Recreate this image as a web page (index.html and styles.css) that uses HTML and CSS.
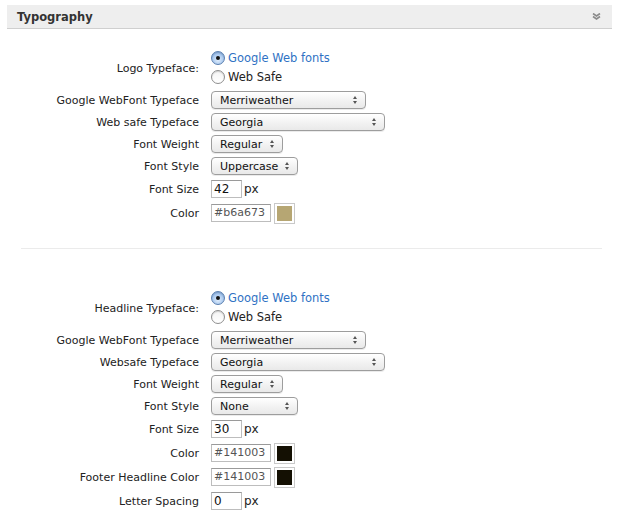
FILE: index.html
```html
<!DOCTYPE html>
<html>
<head>
<meta charset="utf-8">
<link rel="stylesheet" href="styles.css">
</head>
<body>
<div class="panel">
  <div class="header">
    <h2 class="title">Typography</h2>
    <svg class="chev" width="9" height="7" viewBox="0 0 9 7"><path d="M1 0.5 L4.5 3 L8 0.5 M1 3.5 L4.5 6 L8 3.5" fill="none" stroke="#8a8a8a" stroke-width="1.6"/></svg>
  </div>

  <div class="section">
    <div class="row radio-row">
      <div class="label">Logo Typeface:</div>
      <div class="radios">
        <div class="radio-line"><span class="radio on"></span><span class="radio-text blue">Google Web fonts</span></div>
        <div class="radio-line"><span class="radio"></span><span class="radio-text">Web Safe</span></div>
      </div>
    </div>
    <div class="row"><div class="label">Google WebFont Typeface</div><div class="select w155"><span>Merriweather</span><i class="arrows"></i></div></div>
    <div class="row"><div class="label">Web safe Typeface</div><div class="select w174"><span>Georgia</span><i class="arrows"></i></div></div>
    <div class="row"><div class="label">Font Weight</div><div class="select w72"><span>Regular</span><i class="arrows"></i></div></div>
    <div class="row"><div class="label">Font Style</div><div class="select w87"><span>Uppercase</span><i class="arrows"></i></div></div>
    <div class="row tall"><div class="label">Font Size</div><div class="ctl"><div class="input w31">42</div><span class="unit">px</span></div></div>
    <div class="row tall"><div class="label">Color</div><div class="ctl"><div class="input w60 muted">#b6a673</div><div class="swatch"><span class="swatch-fill tan"></span></div></div></div>
  </div>

  <div class="sep"></div>

  <div class="section">
    <div class="row radio-row">
      <div class="label">Headline Typeface:</div>
      <div class="radios">
        <div class="radio-line"><span class="radio on"></span><span class="radio-text blue">Google Web fonts</span></div>
        <div class="radio-line"><span class="radio"></span><span class="radio-text">Web Safe</span></div>
      </div>
    </div>
    <div class="row"><div class="label">Google WebFont Typeface</div><div class="select w155"><span>Merriweather</span><i class="arrows"></i></div></div>
    <div class="row"><div class="label">Websafe Typeface</div><div class="select w174"><span>Georgia</span><i class="arrows"></i></div></div>
    <div class="row"><div class="label">Font Weight</div><div class="select w72"><span>Regular</span><i class="arrows"></i></div></div>
    <div class="row"><div class="label">Font Style</div><div class="select w87"><span>None</span><i class="arrows"></i></div></div>
    <div class="row tall"><div class="label">Font Size</div><div class="ctl"><div class="input w31">30</div><span class="unit">px</span></div></div>
    <div class="row tall"><div class="label">Color</div><div class="ctl"><div class="input w60 muted">#141003</div><div class="swatch"><span class="swatch-fill dark"></span></div></div></div>
    <div class="row tall"><div class="label">Footer Headline Color</div><div class="ctl"><div class="input w60 muted">#141003</div><div class="swatch"><span class="swatch-fill dark"></span></div></div></div>
    <div class="row tall"><div class="label">Letter Spacing</div><div class="ctl"><div class="input w31">0</div><span class="unit">px</span></div></div>
  </div>
</div>
</body>
</html>
```

FILE: styles.css
```css
html, body {
  margin: 0;
  padding: 0;
  background: #ffffff;
}
body {
  font-family: "DejaVu Sans", "Liberation Sans", sans-serif;
  font-size: 11px;
  color: #222;
  width: 618px;
  height: 523px;
  overflow: hidden;
}
.panel {
  padding-top: 5px;
}
.header {
  margin: 0 6px 0 7px;
  height: 23px;
  background: #eeeeee;
  border-bottom: 1px solid #cfcfcf;
  display: flex;
  align-items: center;
  justify-content: space-between;
  padding: 0 11px 0 10px;
}
.title {
  margin: 0;
  font-size: 11.5px;
  font-weight: bold;
  color: #333;
}
.chev {
  display: block;
}
.section {
  margin-top: 18px;
  display: flex;
  flex-direction: column;
}
.sep {
  margin: 23px 16px 38px 21px;
  height: 1px;
  background: #ebebeb;
}
.row {
  display: grid;
  grid-template-columns: 199px auto;
  column-gap: 12px;
  align-items: center;
  height: 22px;
}
.row.tall { height: 24px; }
.radio-row {
  height: 42px;
}
.label {
  text-align: right;
  color: #222;
  white-space: nowrap;
}
.radios {
  display: flex;
  flex-direction: column;
  padding-top: 1px;
  align-self: start;
}
.radio-line {
  display: flex;
  align-items: center;
  height: 19px;
}
.radio {
  width: 12px;
  height: 12px;
  border-radius: 50%;
  border: 1px solid #8e8e8e;
  background: linear-gradient(#f4f4f4, #ffffff);
  box-shadow: inset 0 1px 1px rgba(0,0,0,0.15);
  position: relative;
  flex: none;
}
.radio.on {
  border-color: #5a7fb0;
  background: radial-gradient(circle at 50% 65%, #e4f0fd 0, #a9c8ee 55%, #7aa6dd 100%);
}
.radio.on::after {
  content: "";
  position: absolute;
  left: 4px;
  top: 4px;
  width: 4px;
  height: 4px;
  border-radius: 50%;
  background: #111;
}
.radio-text {
  margin-left: 3px;
  font-size: 11.5px;
  color: #222;
}
.radio-text.blue { color: #2f72c4; }
.select {
  box-sizing: border-box;
  height: 18px;
  border: 1px solid #9d9d9d;
  border-radius: 4px;
  background: linear-gradient(#ffffff, #f1f1f1 60%, #e9e9e9);
  box-shadow: 0 1px 0 rgba(0,0,0,0.08);
  display: flex;
  align-items: center;
  justify-content: space-between;
  padding: 0 7px 0 8px;
  color: #111;
}
.arrows {
  width: 5px;
  height: 8px;
  position: relative;
}
.arrows::before, .arrows::after {
  content: "";
  position: absolute;
  left: 0;
  border-left: 2.5px solid transparent;
  border-right: 2.5px solid transparent;
}
.arrows::before { top: 0; border-bottom: 3px solid #555; }
.arrows::after { bottom: 0; border-top: 3px solid #555; }
.w155 { width: 155px; }
.w174 { width: 174px; }
.w72 { width: 72px; }
.w87 { width: 87px; }
.ctl {
  display: flex;
  align-items: center;
}
.input {
  box-sizing: border-box;
  height: 18px;
  border: 1px solid #bdbdbd;
  border-top-color: #9a9a9a;
  background: #fff;
  padding: 0 2px;
  line-height: 16px;
  font-size: 12px;
  color: #111;
}
.input.muted { color: #555; font-size: 11px; }
.w31 { width: 31px; }
.w60 { width: 60px; }
.unit {
  margin-left: 2px;
  font-size: 12px;
  color: #222;
}
.swatch {
  box-sizing: border-box;
  width: 21px;
  height: 21px;
  margin-left: 3px;
  border: 1px solid #c9c9c9;
  padding: 2px;
  background: #fff;
}
.swatch-fill {
  display: block;
  width: 15px;
  height: 15px;
}
.tan { background: #b6a673; }
.dark { background: #141003; }
```
